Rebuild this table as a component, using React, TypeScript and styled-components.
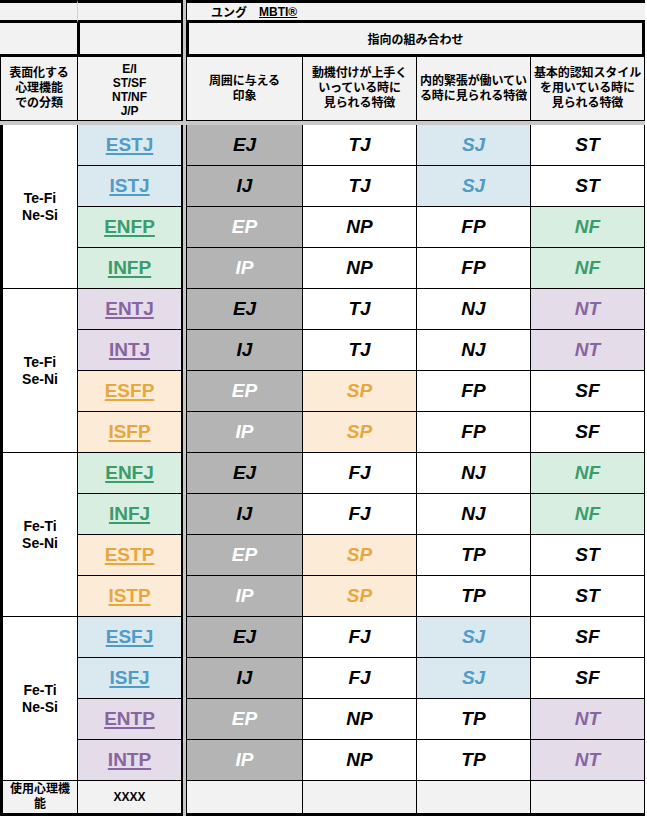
import React from 'react';
import styled, { createGlobalStyle, css } from 'styled-components';

type Tone = 'blue' | 'green' | 'purple' | 'orange' | 'none';

const BG: Record<Tone, string> = {
  blue: '#dae8ef',
  green: '#d7eee1',
  purple: '#e5dce9',
  orange: '#fcebd6',
  none: '#ffffff',
};
const FG: Record<Tone, string> = {
  blue: '#4f9cc7',
  green: '#3b9c6c',
  purple: '#8766a0',
  orange: '#e8a73c',
  none: '#000000',
};

const Global = createGlobalStyle`
  html, body { margin: 0; padding: 0; background: #ffffff; }
  body { font-family: "Liberation Sans", "Noto Sans CJK JP", sans-serif; color: #000; }
`;

const Sheet = styled.div`
  display: grid;
  width: 645px;
  grid-template-columns: 78px 105px 3px 117px 114px 114px 114px;
  grid-template-rows: 23px 34px 64px 4px repeat(16, 41px) 35px;
`;

const base = css`
  box-sizing: border-box;
  display: flex;
  align-items: center;
  justify-content: center;
  text-align: center;
  border: 0 solid #000;
  font-weight: 700;
  min-width: 0;
`;

const Divider = styled.div`
  grid-column: 3;
  grid-row: 1 / -1;
  background: #c6c6c6;
`;

const Band = styled.div`
  grid-column: 1 / -1;
  grid-row: 4;
  background: #c8c8c8;
`;

const TopCell = styled.div<{ $wide?: boolean }>`
  ${base};
  background: #f2f2f2;
  border-top-width: 3px;
  border-bottom-width: 3px;
  border-right: ${(p) => (p.$wide ? '1px solid #d4d4d4' : '2px solid #000')};
`;

const TitleCell = styled.div`
  ${base};
  grid-column: 4 / span 4;
  justify-content: flex-start;
  padding-left: 24px;
  background: #f2f2f2;
  border-top-width: 3px;
  border-bottom-width: 3px;
  border-left-width: 1px;
  font-size: 12px;
  white-space: pre;
`;

const Mark = styled.span`
  text-decoration: underline;
  text-underline-offset: 1px;
`;

const BannerSide = styled.div<{ $first?: boolean }>`
  ${base};
  background: #f2f2f2;
  border-bottom-width: 3px;
  border-right-width: ${(p) => (p.$first ? 1 : 2)}px;
  border-left-width: ${(p) => (p.$first ? 0 : 2)}px;
`;

const BannerCell = styled.div`
  ${base};
  grid-column: 4 / span 4;
  background: #f2f2f2;
  border-width: 0 3px 3px 3px;
  font-size: 12px;
`;

const HeadCell = styled.div<{ $l?: number; $r?: number }>`
  ${base};
  background: #f2f2f2;
  border-bottom-width: 1px;
  border-left-width: ${(p) => p.$l ?? 0}px;
  border-right-width: ${(p) => p.$r ?? 1}px;
  font-size: 12px;
  line-height: 15px;
  white-space: nowrap;
  letter-spacing: -0.1px;
`;

const CodeHead = styled(HeadCell)`
  line-height: 14px;
  padding-top: 2px;
`;

const GroupCell = styled.div`
  ${base};
  grid-row: span 4;
  background: #fff;
  border-left-width: 3px;
  border-right-width: 1px;
  border-bottom-width: 1px;
  font-size: 14px;
  line-height: 17px;
`;

const TypeCell = styled.div<{ $tone: Tone }>`
  ${base};
  background: ${(p) => BG[p.$tone]};
  color: ${(p) => FG[p.$tone]};
  border-right-width: 2px;
  border-bottom-width: 1px;
  font-size: 19px;
  text-decoration: underline;
  text-decoration-thickness: 1.5px;
  text-underline-offset: 2px;
`;

const ImpressionCell = styled.div<{ $light: boolean }>`
  ${base};
  background: #b4b4b4;
  color: ${(p) => (p.$light ? '#ffffff' : '#000000')};
  border-left-width: 1px;
  border-right-width: 1px;
  border-bottom-width: 1px;
  font-size: 19px;
  font-style: italic;
`;

const TraitCell = styled.div<{ $tone: Tone }>`
  ${base};
  background: ${(p) => BG[p.$tone]};
  color: ${(p) => FG[p.$tone]};
  border-right-width: 1px;
  border-bottom-width: 1px;
  font-size: 19px;
  font-style: italic;
`;

const FootCell = styled.div<{ $l?: number; $r?: number }>`
  ${base};
  background: #f2f2f2;
  border-bottom-width: 3px;
  border-left-width: ${(p) => p.$l ?? 0}px;
  border-right-width: ${(p) => p.$r ?? 1}px;
  font-size: 12px;
  line-height: 15px;
  padding: 0 4px;
`;

type Row = {
  type: string;
  tone: Tone;
  imp: string;
  d: [string, Tone];
  e: [string, Tone];
  f: [string, Tone];
};

const groups: { label: [string, string]; rows: Row[] }[] = [
  {
    label: ['Te-Fi', 'Ne-Si'],
    rows: [
      { type: 'ESTJ', tone: 'blue', imp: 'EJ', d: ['TJ', 'none'], e: ['SJ', 'blue'], f: ['ST', 'none'] },
      { type: 'ISTJ', tone: 'blue', imp: 'IJ', d: ['TJ', 'none'], e: ['SJ', 'blue'], f: ['ST', 'none'] },
      { type: 'ENFP', tone: 'green', imp: 'EP', d: ['NP', 'none'], e: ['FP', 'none'], f: ['NF', 'green'] },
      { type: 'INFP', tone: 'green', imp: 'IP', d: ['NP', 'none'], e: ['FP', 'none'], f: ['NF', 'green'] },
    ],
  },
  {
    label: ['Te-Fi', 'Se-Ni'],
    rows: [
      { type: 'ENTJ', tone: 'purple', imp: 'EJ', d: ['TJ', 'none'], e: ['NJ', 'none'], f: ['NT', 'purple'] },
      { type: 'INTJ', tone: 'purple', imp: 'IJ', d: ['TJ', 'none'], e: ['NJ', 'none'], f: ['NT', 'purple'] },
      { type: 'ESFP', tone: 'orange', imp: 'EP', d: ['SP', 'orange'], e: ['FP', 'none'], f: ['SF', 'none'] },
      { type: 'ISFP', tone: 'orange', imp: 'IP', d: ['SP', 'orange'], e: ['FP', 'none'], f: ['SF', 'none'] },
    ],
  },
  {
    label: ['Fe-Ti', 'Se-Ni'],
    rows: [
      { type: 'ENFJ', tone: 'green', imp: 'EJ', d: ['FJ', 'none'], e: ['NJ', 'none'], f: ['NF', 'green'] },
      { type: 'INFJ', tone: 'green', imp: 'IJ', d: ['FJ', 'none'], e: ['NJ', 'none'], f: ['NF', 'green'] },
      { type: 'ESTP', tone: 'orange', imp: 'EP', d: ['SP', 'orange'], e: ['TP', 'none'], f: ['ST', 'none'] },
      { type: 'ISTP', tone: 'orange', imp: 'IP', d: ['SP', 'orange'], e: ['TP', 'none'], f: ['ST', 'none'] },
    ],
  },
  {
    label: ['Fe-Ti', 'Ne-Si'],
    rows: [
      { type: 'ESFJ', tone: 'blue', imp: 'EJ', d: ['FJ', 'none'], e: ['SJ', 'blue'], f: ['SF', 'none'] },
      { type: 'ISFJ', tone: 'blue', imp: 'IJ', d: ['FJ', 'none'], e: ['SJ', 'blue'], f: ['SF', 'none'] },
      { type: 'ENTP', tone: 'purple', imp: 'EP', d: ['NP', 'none'], e: ['TP', 'none'], f: ['NT', 'purple'] },
      { type: 'INTP', tone: 'purple', imp: 'IP', d: ['NP', 'none'], e: ['TP', 'none'], f: ['NT', 'purple'] },
    ],
  },
];

export default function App() {
  return (
    <>
      <Global />
      <Sheet>
        <Divider />
        <Band />

        <TopCell $wide />
        <TopCell />
        <TitleCell>
          ユング　<Mark>MBTI®</Mark>
        </TitleCell>

        <BannerSide $first />
        <BannerSide />
        <BannerCell>指向の組み合わせ</BannerCell>

        <HeadCell $l={1}>
          表面化する
          <br />
          心理機能
          <br />
          での分類
        </HeadCell>
        <CodeHead $r={2}>
          E/I
          <br />
          ST/SF
          <br />
          NT/NF
          <br />
          J/P
        </CodeHead>
        <HeadCell $l={1}>
          周囲に与える
          <br />
          印象
        </HeadCell>
        <HeadCell>
          動機付けが上手く
          <br />
          いっている時に
          <br />
          見られる特徴
        </HeadCell>
        <HeadCell>
          内的緊張が働いてい
          <br />
          る時に見られる特徴
        </HeadCell>
        <HeadCell>
          基本的認知スタイル
          <br />
          を用いている時に
          <br />
          見られる特徴
        </HeadCell>

        {groups.map((g) =>
          g.rows.map((r, i) => (
            <React.Fragment key={r.type}>
              {i === 0 && (
                <GroupCell>
                  {g.label[0]}
                  <br />
                  {g.label[1]}
                </GroupCell>
              )}
              <TypeCell $tone={r.tone}>{r.type}</TypeCell>
              <ImpressionCell $light={r.imp.endsWith('P')}>{r.imp}</ImpressionCell>
              <TraitCell $tone={r.d[1]}>{r.d[0]}</TraitCell>
              <TraitCell $tone={r.e[1]}>{r.e[0]}</TraitCell>
              <TraitCell $tone={r.f[1]}>{r.f[0]}</TraitCell>
            </React.Fragment>
          ))
        )}

        <FootCell $l={3}>使用心理機能</FootCell>
        <FootCell $r={2}>XXXX</FootCell>
        <FootCell $l={1} />
        <FootCell />
        <FootCell />
        <FootCell />
      </Sheet>
    </>
  );
}
